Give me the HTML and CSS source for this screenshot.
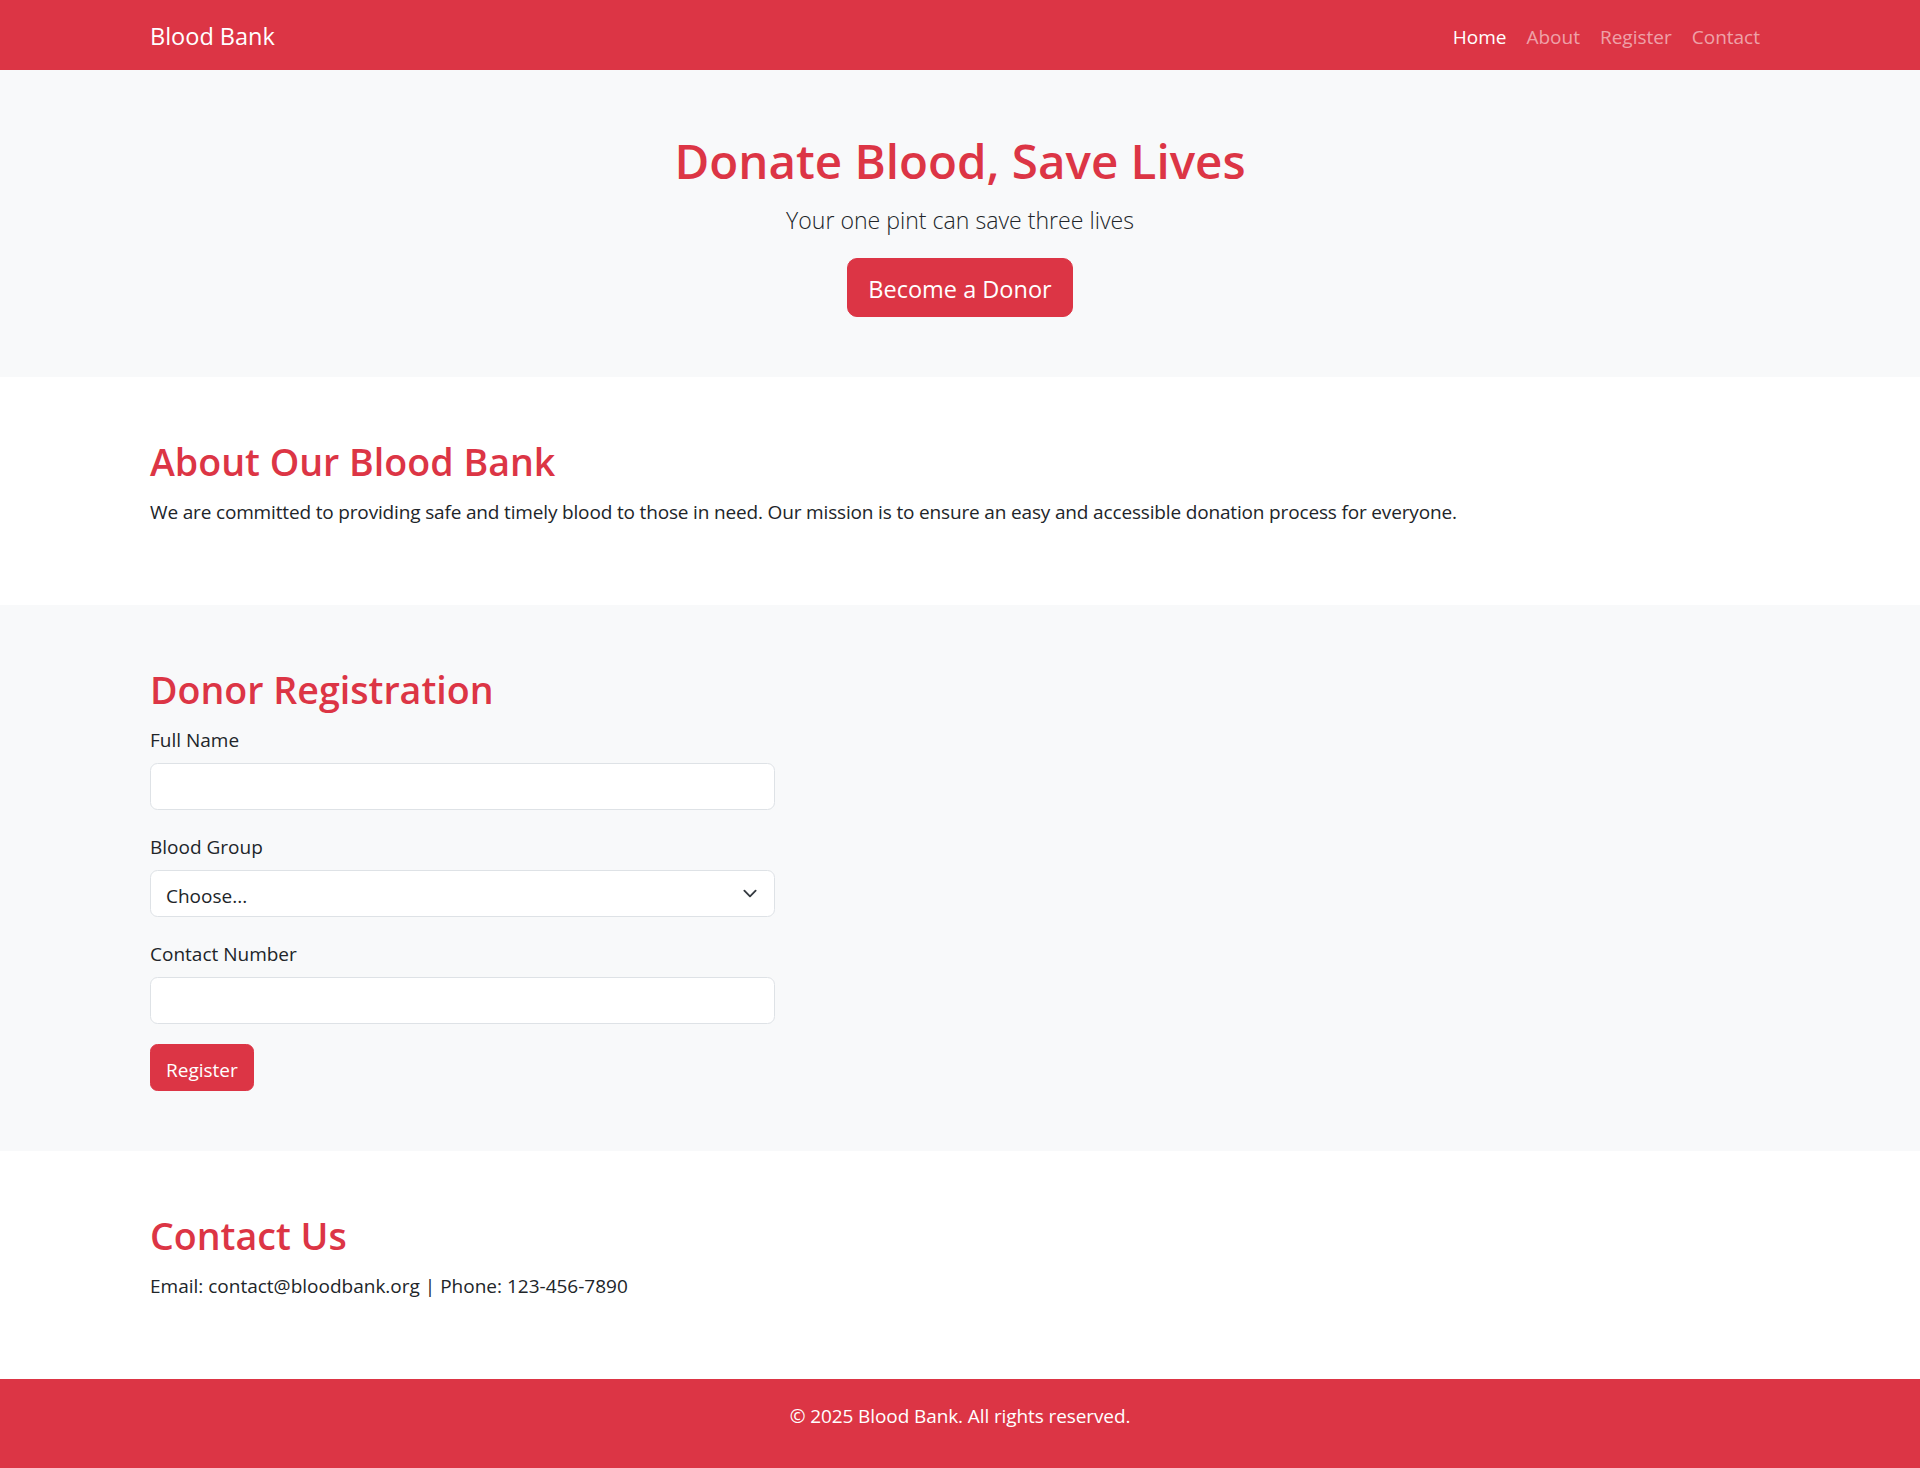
FILE: index.html
```html
<!DOCTYPE html>
<html lang="en">
<head>
<meta charset="utf-8">
<title>Blood Bank</title>
<link rel="stylesheet" href="styles.css">
</head>
<body>
<nav class="navbar">
  <div class="container nav-inner">
    <a class="brand" href="#">Blood Bank</a>
    <ul class="nav-links">
      <li><a class="nav-link active" href="#">Home</a></li>
      <li><a class="nav-link" href="#about">About</a></li>
      <li><a class="nav-link" href="#register">Register</a></li>
      <li><a class="nav-link" href="#contact">Contact</a></li>
    </ul>
  </div>
</nav>

<header class="hero">
  <div class="container">
    <h1 class="hero-title">Donate Blood, Save Lives</h1>
    <p class="lead">Your one pint can save three lives</p>
    <a class="btn btn-lg" href="#register">Become a Donor</a>
  </div>
</header>

<section class="section" id="about">
  <div class="container">
    <h2 class="section-title">About Our Blood Bank</h2>
    <p class="text text-tight">We are committed to providing safe and timely blood to those in need. Our mission is to ensure an easy and accessible donation process for everyone.</p>
  </div>
</section>

<section class="section section-light" id="register">
  <div class="container">
    <h2 class="section-title">Donor Registration</h2>
    <form class="form">
      <div class="field">
        <label class="label" for="name">Full Name</label>
        <input class="input" id="name" type="text">
      </div>
      <div class="field">
        <label class="label" for="group">Blood Group</label>
        <div class="select-wrap">
          <select class="input select" id="group">
            <option>Choose...</option>
            <option>A+</option>
            <option>A-</option>
            <option>B+</option>
            <option>B-</option>
            <option>AB+</option>
            <option>AB-</option>
            <option>O+</option>
            <option>O-</option>
          </select>
          <svg class="chevron" viewBox="0 0 16 16" width="20" height="15" preserveAspectRatio="xMidYMid meet"><path fill="none" stroke="#343a40" stroke-linecap="round" stroke-linejoin="round" stroke-width="2" d="m2 5 6 6 6-6"/></svg>
        </div>
      </div>
      <div class="field">
        <label class="label" for="phone">Contact Number</label>
        <input class="input" id="phone" type="tel">
      </div>
      <button class="btn btn-submit" type="button">Register</button>
    </form>
  </div>
</section>

<section class="section" id="contact">
  <div class="container">
    <h2 class="section-title">Contact Us</h2>
    <p class="text">Email: contact@bloodbank.org | Phone: 123-456-7890</p>
  </div>
</section>

<footer class="footer">
  <p class="footer-text">© 2025 Blood Bank. All rights reserved.</p>
</footer>
</body>
</html>
```

FILE: styles.css
```css
* { box-sizing: border-box; }

html, body {
  margin: 0;
  padding: 0;
}

body {
  font-family: "Segoe UI", "Open Sans", "Noto Sans", sans-serif;
  font-size: 19px;
  line-height: 30px;
  color: #212529;
  background: #fff;
}

.container {
  max-width: 1650px;
  margin: 0 auto;
  padding: 0 15px;
}

/* Navbar */
.navbar {
  background: #dc3545;
  padding: 10px 0;
}
.nav-inner {
  display: flex;
  align-items: center;
  justify-content: space-between;
}
.brand {
  color: #fff;
  text-decoration: none;
  font-size: 23.5px;
  line-height: 37.5px;
  padding: 8.25px 0 4.25px;
  margin-right: 20px;
}
.nav-links {
  list-style: none;
  margin: 0;
  padding: 0;
  display: flex;
}
.nav-link {
  display: block;
  padding: 12px 10px 8px;
  line-height: 30px;
  color: rgba(255, 255, 255, 0.55);
  text-decoration: none;
}
.nav-link.active { color: #fff; }

/* Hero */
.hero {
  background: #f8f9fa;
  padding: 60px 0;
  text-align: center;
}
.hero-title {
  margin: 0 0 9px;
  padding-top: 1px;
  font-size: 47.5px;
  line-height: 60px;
  font-weight: 600;
  color: #dc3545;
}
.lead {
  margin: 0 0 18px;
  padding-top: 2px;
  font-size: 23.1px;
  line-height: 37.5px;
  font-weight: 300;
}
.btn {
  display: inline-block;
  background: #dc3545;
  color: #fff;
  border: 1px solid #dc3545;
  text-decoration: none;
  font-family: inherit;
  cursor: pointer;
}
.btn-lg {
  font-size: 23.5px;
  line-height: 37.5px;
  padding: 12px 20px 8px;
  border-radius: 10px;
}

/* Sections */
.section {
  padding: 60px 0;
}
.section-light { background: #f8f9fa; }
.section-title {
  margin: 0 0 9px;
  padding-top: 1px;
  font-size: 37.6px;
  line-height: 48px;
  font-weight: 600;
  color: #dc3545;
}
.text {
  margin: 0 0 18px;
  padding-top: 2px;
}
.text-tight {
  letter-spacing: -0.16px;
}

/* Form */
.form {
  width: 625px;
}
.field {
  margin-bottom: 20px;
}
.label {
  display: block;
  margin-bottom: 8px;
  padding-top: 2px;
  line-height: 30px;
}
.input {
  display: block;
  width: 100%;
  height: 47px;
  padding: 9.5px 15px 5.5px;
  font-family: inherit;
  font-size: 19px;
  line-height: 30px;
  color: #212529;
  background: #fff;
  border: 1px solid #dee2e6;
  border-radius: 7.5px;
  outline: none;
}
.select-wrap { position: relative; }
.select {
  appearance: none;
  -webkit-appearance: none;
  padding-right: 45px;
}
.chevron {
  position: absolute;
  right: 15px;
  top: 16px;
  pointer-events: none;
}
.btn-submit {
  height: 47px;
  font-size: 19px;
  line-height: 30px;
  padding: 9.5px 15px 5.5px;
  border-radius: 7.5px;
}

/* Footer */
.footer {
  background: #dc3545;
  color: #fff;
  text-align: center;
  padding: 20px 0;
}
.footer-text {
  margin: 0 0 18px;
  padding-top: 2px;
  letter-spacing: -0.1px;
}
```
